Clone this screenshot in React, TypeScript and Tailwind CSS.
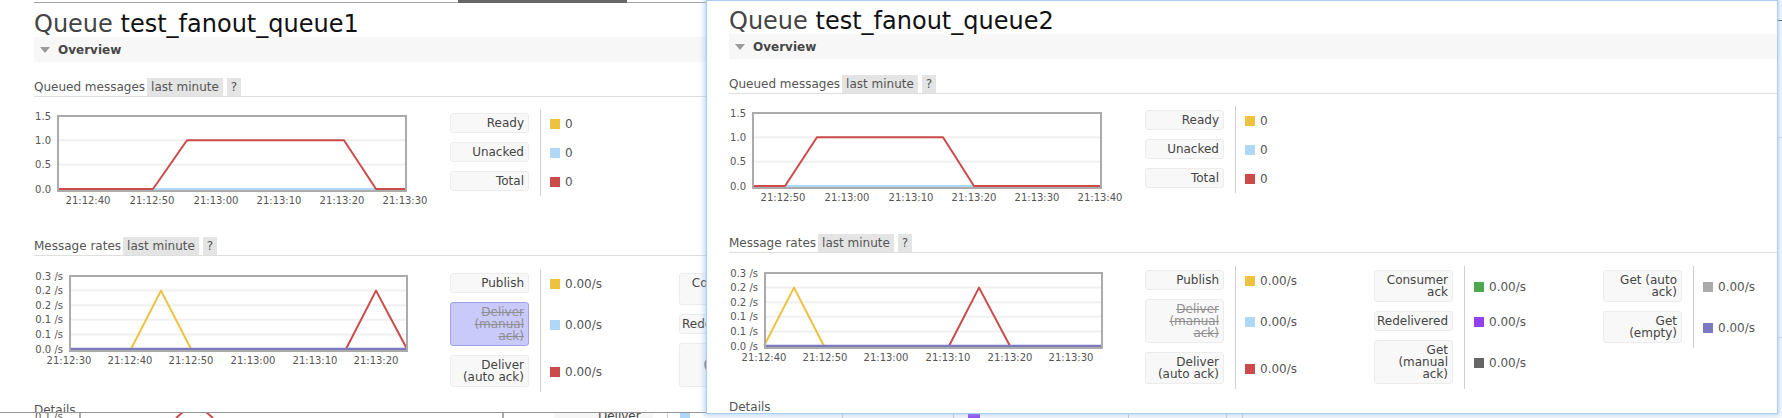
import clsx from "clsx";

type Pt = [number, number];
type Series = { color: string; width?: number; pts: Pt[] };
type Tick = { label: string; at: number };
type Row = { lines: string[]; value: string; sq: string; strike?: boolean; active?: boolean };

const queuedY: Tick[] = [
  { label: "1.5", at: 7 },
  { label: "1.0", at: 31.3 },
  { label: "0.5", at: 55.7 },
  { label: "0.0", at: 80 },
];

// flot rounds the 0.05 steps to one decimal, hence the repeated labels
const rateY: Tick[] = [
  { label: "0.3 /s", at: 7 },
  { label: "0.2 /s", at: 21.6 },
  { label: "0.2 /s", at: 36.2 },
  { label: "0.1 /s", at: 50.8 },
  { label: "0.1 /s", at: 65.4 },
  { label: "0.0 /s", at: 80 },
];

const queuedXAt = [31, 95, 159, 222, 285, 348];
const rateXAt = [0, 61, 122, 184, 246, 307];

function Chart({
  boxX,
  boxW,
  yTicks,
  xLabels,
  xAt,
  series,
}: {
  boxX: number;
  boxW: number;
  yTicks: Tick[];
  xLabels: string[];
  xAt: number[];
  series: Series[];
}) {
  return (
    <svg width={416} height={100} className="shrink-0" fontFamily="DejaVu Sans, Verdana, sans-serif" fontSize={10}>
      <rect x={boxX} y={6} width={boxW} height={77} fill="#fff" />
      {yTicks.slice(1, -1).map((t) => (
        <line key={t.at} x1={boxX} x2={boxX + boxW} y1={t.at} y2={t.at} stroke="#f0f0f0" strokeWidth={2} />
      ))}
      {series.map((s, i) => (
        <polyline
          key={i}
          points={s.pts.map(([x, y]) => `${boxX + x},${y}`).join(" ")}
          fill="none"
          stroke={s.color}
          strokeWidth={s.width ?? 2}
          strokeLinejoin="round"
        />
      ))}
      <rect x={boxX + 1} y={7} width={boxW - 2} height={75} fill="none" stroke="#ababab" strokeWidth={2} />
      {yTicks.map((t) => (
        <text key={t.at} x={boxX - 6} y={t.at + 3.6} textAnchor="end" fill="#555">
          {t.label}
        </text>
      ))}
      {xLabels.map((l, i) => (
        <text key={l} x={boxX + xAt[i]} y={95} textAnchor="middle" fill="#555">
          {l}
        </text>
      ))}
    </svg>
  );
}

function LabelBox({ row }: { row: Row }) {
  return (
    <div
      className={clsx(
        "w-[79px] rounded-[3px] border py-[3px] pl-[2px] pr-[4px] text-right text-[12px] leading-[12px] whitespace-nowrap",
        row.active ? "border-[#a2a2ea] bg-[#c9c9fa]" : "border-[#ececec] bg-[#f8f8f8]",
        row.strike ? "text-[#8f8f8f] line-through" : "text-[#444]"
      )}
    >
      {row.lines.map((l) => (
        <div key={l}>{l}</div>
      ))}
    </div>
  );
}

function LegendCol({ rows, className }: { rows: Row[]; className?: string }) {
  return (
    <div className={clsx("flex shrink-0 flex-col", className)}>
      {rows.map((r) => (
        <div key={r.lines.join(" ")} className="flex">
          <div className="pt-[4px] pb-[5px]">
            <LabelBox row={r} />
          </div>
          <div className="ml-[11px] flex items-center border-l border-[#cfcfcf] pl-[9px] text-[12px] text-[#555]">
            <span className={clsx("mr-[5px] h-[10px] w-[10px]", r.sq)} />
            {r.value}
          </div>
        </div>
      ))}
    </div>
  );
}

function SectionHead({ title, className }: { title: string; className?: string }) {
  return (
    <div className={clsx("flex h-[19px] items-stretch border-b border-[#dedede] text-[12px] text-[#555]", className)}>
      <span className="flex items-center whitespace-nowrap">{title}</span>
      <span className="ml-[2px] flex items-center bg-[#e4e4e4] px-[4px] whitespace-nowrap">last minute</span>
      <span className="ml-[4px] flex items-center bg-[#e4e4e4] px-[4px]">?</span>
    </div>
  );
}

const queuedRows: Row[] = [
  { lines: ["Ready"], value: "0", sq: "bg-[#edc240]" },
  { lines: ["Unacked"], value: "0", sq: "bg-[#afd8f8]" },
  { lines: ["Total"], value: "0", sq: "bg-[#cb4b4b]" },
];

function rateCols(active: boolean): Row[][] {
  return [
    [
      { lines: ["Publish"], value: "0.00/s", sq: "bg-[#edc240]" },
      { lines: ["Deliver", "(manual", "ack)"], value: "0.00/s", sq: "bg-[#afd8f8]", strike: true, active },
      { lines: ["Deliver", "(auto ack)"], value: "0.00/s", sq: "bg-[#cb4b4b]" },
    ],
    [
      { lines: ["Consumer", "ack"], value: "0.00/s", sq: "bg-[#4da74d]" },
      { lines: ["Redelivered"], value: "0.00/s", sq: "bg-[#9440ed]" },
      { lines: ["Get", "(manual", "ack)"], value: "0.00/s", sq: "bg-[#666666]" },
    ],
    [
      { lines: ["Get (auto", "ack)"], value: "0.00/s", sq: "bg-[#aaaaaa]" },
      { lines: ["Get", "(empty)"], value: "0.00/s", sq: "bg-[#7c79c3]" },
    ],
  ];
}

type PageProps = {
  name: string;
  queuedLabels: string[];
  red: number[];
  rateLabels: string[];
  yellowAt: number;
  redAt: number;
  activeManual: boolean;
};

function QueuePage({ name, queuedLabels, red, rateLabels, yellowAt, redAt, activeManual }: PageProps) {
  const [r0, r1, r2, r3] = red;
  const cols = rateCols(activeManual);
  return (
    <div>
      <div className="flex h-[3px]">
        <div className="w-[424px] border-b border-[#a5a5a5]" />
        <div className="w-[169px] bg-[#666]" />
        <div className="flex-1 border-b border-[#a5a5a5]" />
      </div>

      <h1 className="mt-[8px] h-[26px] whitespace-nowrap text-[24px] leading-[26px] text-[#444]">
        Queue <span className="text-[#111]">{name}</span>
      </h1>

      <div className="flex h-[25px] items-center bg-[#f7f7f7]">
        <span className="ml-[6px] h-0 w-0 border-x-[5px] border-t-[6px] border-x-transparent border-t-[#9a9a9a]" />
        <span className="ml-[8px] text-[12px] font-bold text-[#474747]">Overview</span>
      </div>

      <SectionHead title="Queued messages" className="mt-[16px]" />
      <div className="mt-[12px] flex items-start">
        <Chart
          boxX={23}
          boxW={350}
          yTicks={queuedY}
          xLabels={queuedLabels}
          xAt={queuedXAt}
          series={[
            { color: "#edc240", pts: [[0, 80], [350, 80]] },
            { color: "#afd8f8", pts: [[0, 80], [350, 80]] },
            {
              color: "#cb4b4b",
              pts: [[0, 80], [r0, 80], [r1, 31.3], [r2, 31.3], [r3, 80], [350, 80]],
            },
          ]}
        />
        <LegendCol rows={queuedRows} />
      </div>

      <SectionHead title="Message rates" className="mt-[28px]" />
      <div className="mt-[13px] flex items-start">
        <Chart
          boxX={35}
          boxW={339}
          yTicks={rateY}
          xLabels={rateLabels}
          xAt={rateXAt}
          series={[
            { color: "#edc240", pts: [[yellowAt, 80], [yellowAt + 30, 21.6], [yellowAt + 60, 80]] },
            { color: "#cb4b4b", pts: [[redAt, 80], [redAt + 30, 21.6], [redAt + 61, 80]] },
            { color: "#7c79c3", width: 2.5, pts: [[0, 80], [339, 80]] },
          ]}
        />
        <LegendCol rows={cols[0]} className="w-[229px]" />
        <LegendCol rows={cols[1]} className="w-[229px]" />
        <LegendCol rows={cols[2]} className="w-[200px]" />
      </div>

      <div className="mt-[11px] text-[12px] leading-[14px] text-[#555]">Details</div>
    </div>
  );
}

// third window, only a few pixels of it show under the other two
function BackLayer() {
  return (
    <div className="absolute inset-0 bg-white">
      <div className="absolute right-0 top-0 flex h-full w-[10px] flex-col">
        <div className="mt-[20px] h-px bg-[#4d5b74]" />
        <div className="mt-[116px] h-px bg-[#dcdcdc]" />
        <div className="mt-[199px] h-px bg-[#dcdcdc]" />
      </div>
      <div className="absolute left-0 top-[412px] flex h-[6px] w-full items-start overflow-hidden text-[#555]">
        <span className="ml-[35px] -mt-[1px] text-[10px] leading-[12px]">0.1 /s</span>
        <div className="ml-[16px] h-full w-[2px] bg-[#ababab]" />
        <svg width={421} height={6} className="shrink-0">
          <line x1={95} y1={6} x2={102} y2={0} stroke="#cb4b4b" strokeWidth={2} />
          <line x1={125} y1={0} x2={132} y2={6} stroke="#cb4b4b" strokeWidth={2} />
        </svg>
        <div className="h-full w-[2px] bg-[#ababab]" />
        <div className="ml-[50px] h-full w-[99px] rounded-t-[3px] bg-[#f6f6f6] pr-[12px] text-right text-[12px] leading-[12px] text-[#444]">
          <span className="-mt-[2px] block">Deliver</span>
        </div>
        <div className="ml-[14px] h-full w-px bg-[#cfcfcf]" />
        <div className="ml-[12px] h-[6px] w-[10px] bg-[#afd8f8]" />
        <div className="ml-[152px] h-full w-px bg-[#cfcfcf]" />
        <div className="ml-[110px] h-full w-px bg-[#cfcfcf]" />
        <div className="ml-[14px] h-[6px] w-[12px] bg-[#9440ed]" />
        <div className="ml-[148px] h-full w-px bg-[#cfcfcf]" />
        <div className="ml-[97px] h-full w-px bg-[#cfcfcf]" />
        <div className="ml-[15px] h-full w-px bg-[#cfcfcf]" />
      </div>
    </div>
  );
}

export default function App() {
  return (
    <div className="relative h-[418px] w-[1782px] overflow-hidden bg-white font-['DejaVu_Sans',Verdana,sans-serif]">
      <BackLayer />

      <div className="absolute left-0 top-0 h-[413px] w-[1100px] overflow-hidden border-b border-[#959595] bg-white pl-[34px]">
        <QueuePage
          name="test_fanout_queue1"
          queuedLabels={["21:12:40", "21:12:50", "21:13:00", "21:13:10", "21:13:20", "21:13:30"]}
          red={[96, 130, 287, 319]}
          rateLabels={["21:12:30", "21:12:40", "21:12:50", "21:13:00", "21:13:10", "21:13:20"]}
          yellowAt={62}
          redAt={277}
          activeManual
        />
      </div>

      <div className="absolute left-[706px] top-0 h-[414px] w-[1072px] overflow-hidden border border-[#a9cdf1] bg-white pl-[22px] shadow-[0_0_5px_2px_rgba(140,185,235,0.55)]">
        <div className="-mt-[4px]">
          <QueuePage
            name="test_fanout_queue2"
            queuedLabels={["21:12:50", "21:13:00", "21:13:10", "21:13:20", "21:13:30", "21:13:40"]}
            red={[33, 65, 191, 222]}
            rateLabels={["21:12:40", "21:12:50", "21:13:00", "21:13:10", "21:13:20", "21:13:30"]}
            yellowAt={0}
            redAt={185}
            activeManual={false}
          />
        </div>
      </div>
    </div>
  );
}
